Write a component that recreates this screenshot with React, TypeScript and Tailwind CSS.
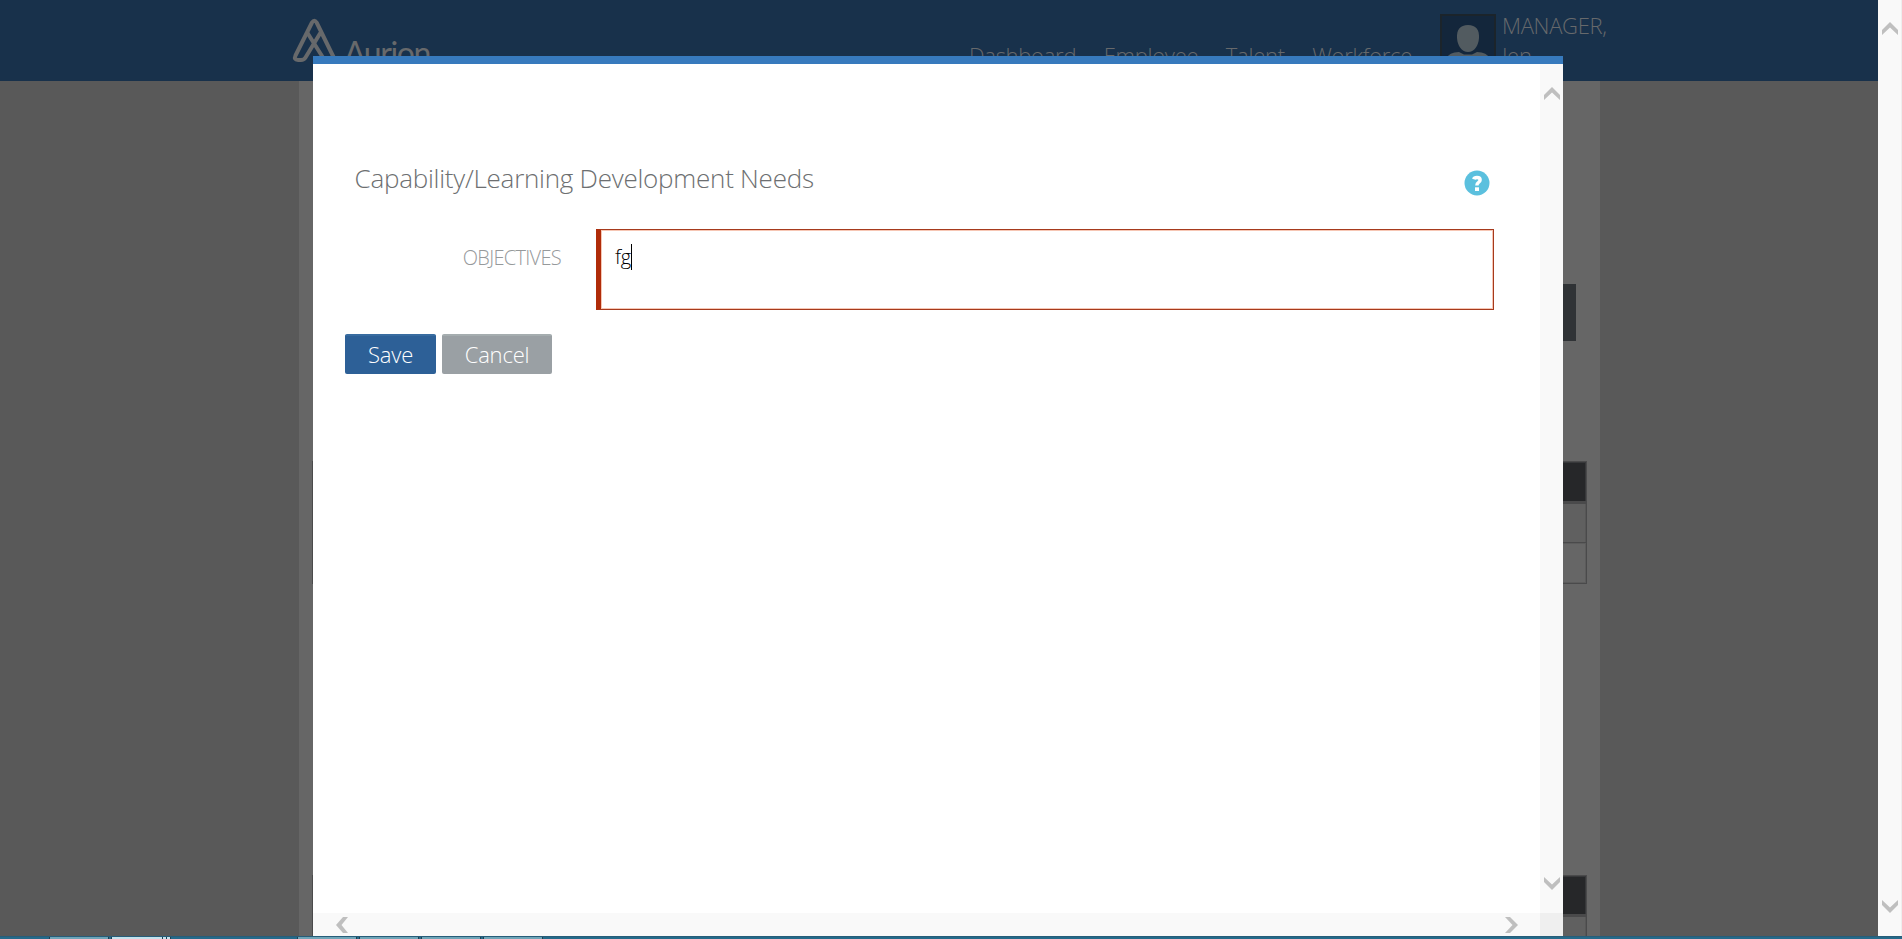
import React from "react";

function Chevron({ dir }: { dir: "up" | "down" | "left" | "right" }) {
  const shapes = {
    up: "M0 8 8 0 16 8V13L8 5.5 0 13Z",
    down: "M0 5 8 13 16 5V0L8 7.5 0 0Z",
    left: "M7 0 0 8 7 16H12L5.5 8 12 0Z",
    right: "M5 0 13 8 5 16H0L7.5 8 0 0Z",
  };
  const vertical = dir === "up" || dir === "down";
  return (
    <svg
      className="block shrink-0"
      width={vertical ? 16 : 13}
      height={vertical ? 13 : 16}
      viewBox={vertical ? "0 0 16 13" : "0 0 13 16"}
    >
      <path d={shapes[dir]} fill="#bfbfbf" />
    </svg>
  );
}

function Header() {
  return (
    <header className="flex h-[81px] shrink-0 items-start bg-[#18314b] text-[#67696b]">
      <div className="ml-[292px] flex w-[677px] shrink-0 pt-[18px]">
        <svg width="48" height="45" viewBox="0 0 48 45" fill="none" stroke="#67696b" strokeWidth="4" strokeLinejoin="round" strokeLinecap="round">
          <path d="M28 15.500 13.500 39.500Q12 42 9 42H6Q1.500 42 3.500 37.500L20 4.500Q22.300 1 24.600 4.500L43 42" />
          <path d="M15.500 15 32.500 42" />
        </svg>
        <span className="ml-[4px] mt-[13px] font-['Lato'] text-[32px] font-normal leading-[44px] tracking-[-1.4px]">Aurion</span>
      </div>
      <nav className="flex gap-[27.5px] whitespace-nowrap pt-[40px] text-[22px] leading-[30px] tracking-[-0.28px]">
        <span>Dashboard</span>
        <span>Employee</span>
        <span>Talent</span>
        <span>Workforce</span>
      </nav>
      <div className="ml-auto mt-[14px] shrink-0">
        <svg className="block" width="56" height="56" viewBox="0 0 56 56">
          <rect x="1" y="1" width="54" height="54" fill="#13263b" stroke="#1b242b" strokeWidth="2" />
          <path d="M28 11C36 11 39.500 16 39 24S34 38 28 38 17.500 32 17 24 20 11 28 11Z" fill="#525b60" />
          <path d="M6 54V45Q9 38 19 38L24 40.500H32L37 38Q47 38 50 45V54Z" fill="#525b60" />
        </svg>
      </div>
      <div className="ml-[6px] w-[376px] shrink-0 pt-[10px] text-[22px] leading-[30px] tracking-[-0.3px]">
        MANAGER,
        <br />
        Jen
      </div>
    </header>
  );
}

function Backdrop() {
  return (
    <main className="min-h-0 flex-1 bg-[#595959] pl-[299px]">
      <div className="flex h-full w-[1301px] flex-col overflow-hidden bg-[#666666] pl-[13px] pr-[13px]">
        <div className="ml-3 mr-[11px] mt-[203px] h-[57px] shrink-0 bg-[#303336]" />
        <div className="mt-[120px] flex h-[123px] shrink-0 flex-col border border-[#4a4a4b]">
          <div className="h-[39px] border-r border-t border-[#37383a] bg-[#262729]" />
          <div className="h-[3px] bg-[#4a4a4b]" />
          <div className="h-[38px] border-r border-[#575757] bg-[#606060]" />
          <div className="h-px bg-[#4a4a4b]" />
          <div className="flex-1 border-r border-t border-b border-[#5c5c5c]" />
        </div>
        <div className="mt-[291px] flex h-[123px] shrink-0 flex-col border border-[#4a4a4b]">
          <div className="h-[38px] border-r border-t border-[#37383a] bg-[#262729]" />
          <div className="h-[3px] bg-[#4a4a4b]" />
          <div className="flex-1 border-r border-[#575757] bg-[#606060]" />
        </div>
      </div>
    </main>
  );
}

function Dialog() {
  return (
    <section className="absolute left-[313px] top-[56px] flex h-[880px] w-[1250px] flex-col border-t-8 border-[#377abd] bg-white">
      <div className="flex min-h-0 flex-1">
        <div className="flex-1 pl-[32px] pr-[46px]">
          <div className="flex h-[165px] items-start justify-between">
            <h1 className="ml-[9.5px] mt-[96px] text-[26px] leading-[36px] tracking-[-0.25px] text-[#6d6f71]">
              Capability/Learning Development Needs
            </h1>
            <svg className="mr-[4.5px] mt-[106px]" width="26" height="26" viewBox="0 0 26 26">
              <circle cx="13" cy="13" r="12.500" fill="#5bc0de" />
              <path d="M9.800 9.200Q10.300 7.600 13 7.600 16.100 7.600 16.100 10 16.100 11.300 14.500 12.400 12.900 13.400 12.900 15.400" fill="none" stroke="white" strokeWidth="3.500" />
              <rect x="11" y="17.300" width="4" height="3.700" fill="white" />
            </svg>
          </div>
          <div className="flex">
            <label className="w-[216px] shrink-0 pt-[15px] text-right text-[20px] leading-[28px] tracking-[-0.7px] text-[#96999b]">OBJECTIVES</label>
            <div className="ml-[35px] flex h-[81px] flex-1 border border-l-[5px] border-[#a63a1d] border-l-[#b02c09] shadow-[inset_0_0_0_1px_#f6c6b4]">
              <span className="ml-[14px] mt-[12px] text-[20px] leading-[30px] tracking-[-0.3px] text-black">fg</span>
              <span className="mt-[14px] h-[26px] w-px bg-black" />
            </div>
          </div>
          <div className="mt-6 flex gap-1.5 text-[22px] tracking-[-0.2px] text-white">
            <button className="h-10 w-[91px] rounded-[2px] border-t-2 border-[#386ca0] bg-[#2d6097] pb-[2px] leading-[36px]">Save</button>
            <button className="h-10 w-[110px] rounded-[2px] border-t-2 border-[#a5adaf] bg-[#9aa0a4] pb-[2px] leading-[36px]">Cancel</button>
          </div>
        </div>
        <div className="flex w-[23px] flex-col items-center justify-between bg-[#f9f9f9] pb-[23px] pt-[23px]">
          <Chevron dir="up" />
          <Chevron dir="down" />
        </div>
      </div>
      <div className="flex h-[23px] shrink-0">
        <div className="flex flex-1 items-center justify-between bg-[#f9f9f9] pl-[23px] pr-[22px]">
          <Chevron dir="left" />
          <Chevron dir="right" />
        </div>
        <div className="w-[23px] bg-[#efefef]" />
      </div>
    </section>
  );
}

function Taskbar() {
  return (
    <footer className="flex h-[3px] shrink-0 border-t border-[#275d79] bg-[#256a8a] pl-[49px]">
      <div className="h-full w-[60px] shrink-0 border-x border-[#1c3f52] bg-[#6fa5b8]" />
      <div className="ml-[2px] h-full w-[52px] shrink-0 border-x border-[#1c3f52] bg-[#c4e2ec]" />
      <div className="h-full w-[4px] shrink-0 border-r border-[#1c3f52] bg-[#c4e2ec]" />
      <div className="h-full w-[4px] shrink-0 border-r border-[#1c3f52] bg-[#c4e2ec]" />
      <div className="ml-[126px] flex gap-[2px]">
        {[0, 1, 2, 3].map((tab) => (
          <div key={tab} className="h-full w-[60px] shrink-0 border-x border-[#1c3f52] bg-[#6fa5b8]" />
        ))}
      </div>
    </footer>
  );
}

export default function App() {
  return (
    <div className="relative flex h-[939px] w-[1902px] flex-col overflow-hidden font-['Open_Sans',sans-serif] font-light">
      <div className="flex min-h-0 flex-1">
        <div className="flex w-[1878px] flex-col">
          <Header />
          <Backdrop />
        </div>
        <div className="flex w-6 flex-col items-center justify-between border-r border-[#eeeeee] bg-[#f9f9f9] pb-[23px] pt-[22px]">
          <Chevron dir="up" />
          <Chevron dir="down" />
        </div>
      </div>
      <Taskbar />
      <Dialog />
    </div>
  );
}
